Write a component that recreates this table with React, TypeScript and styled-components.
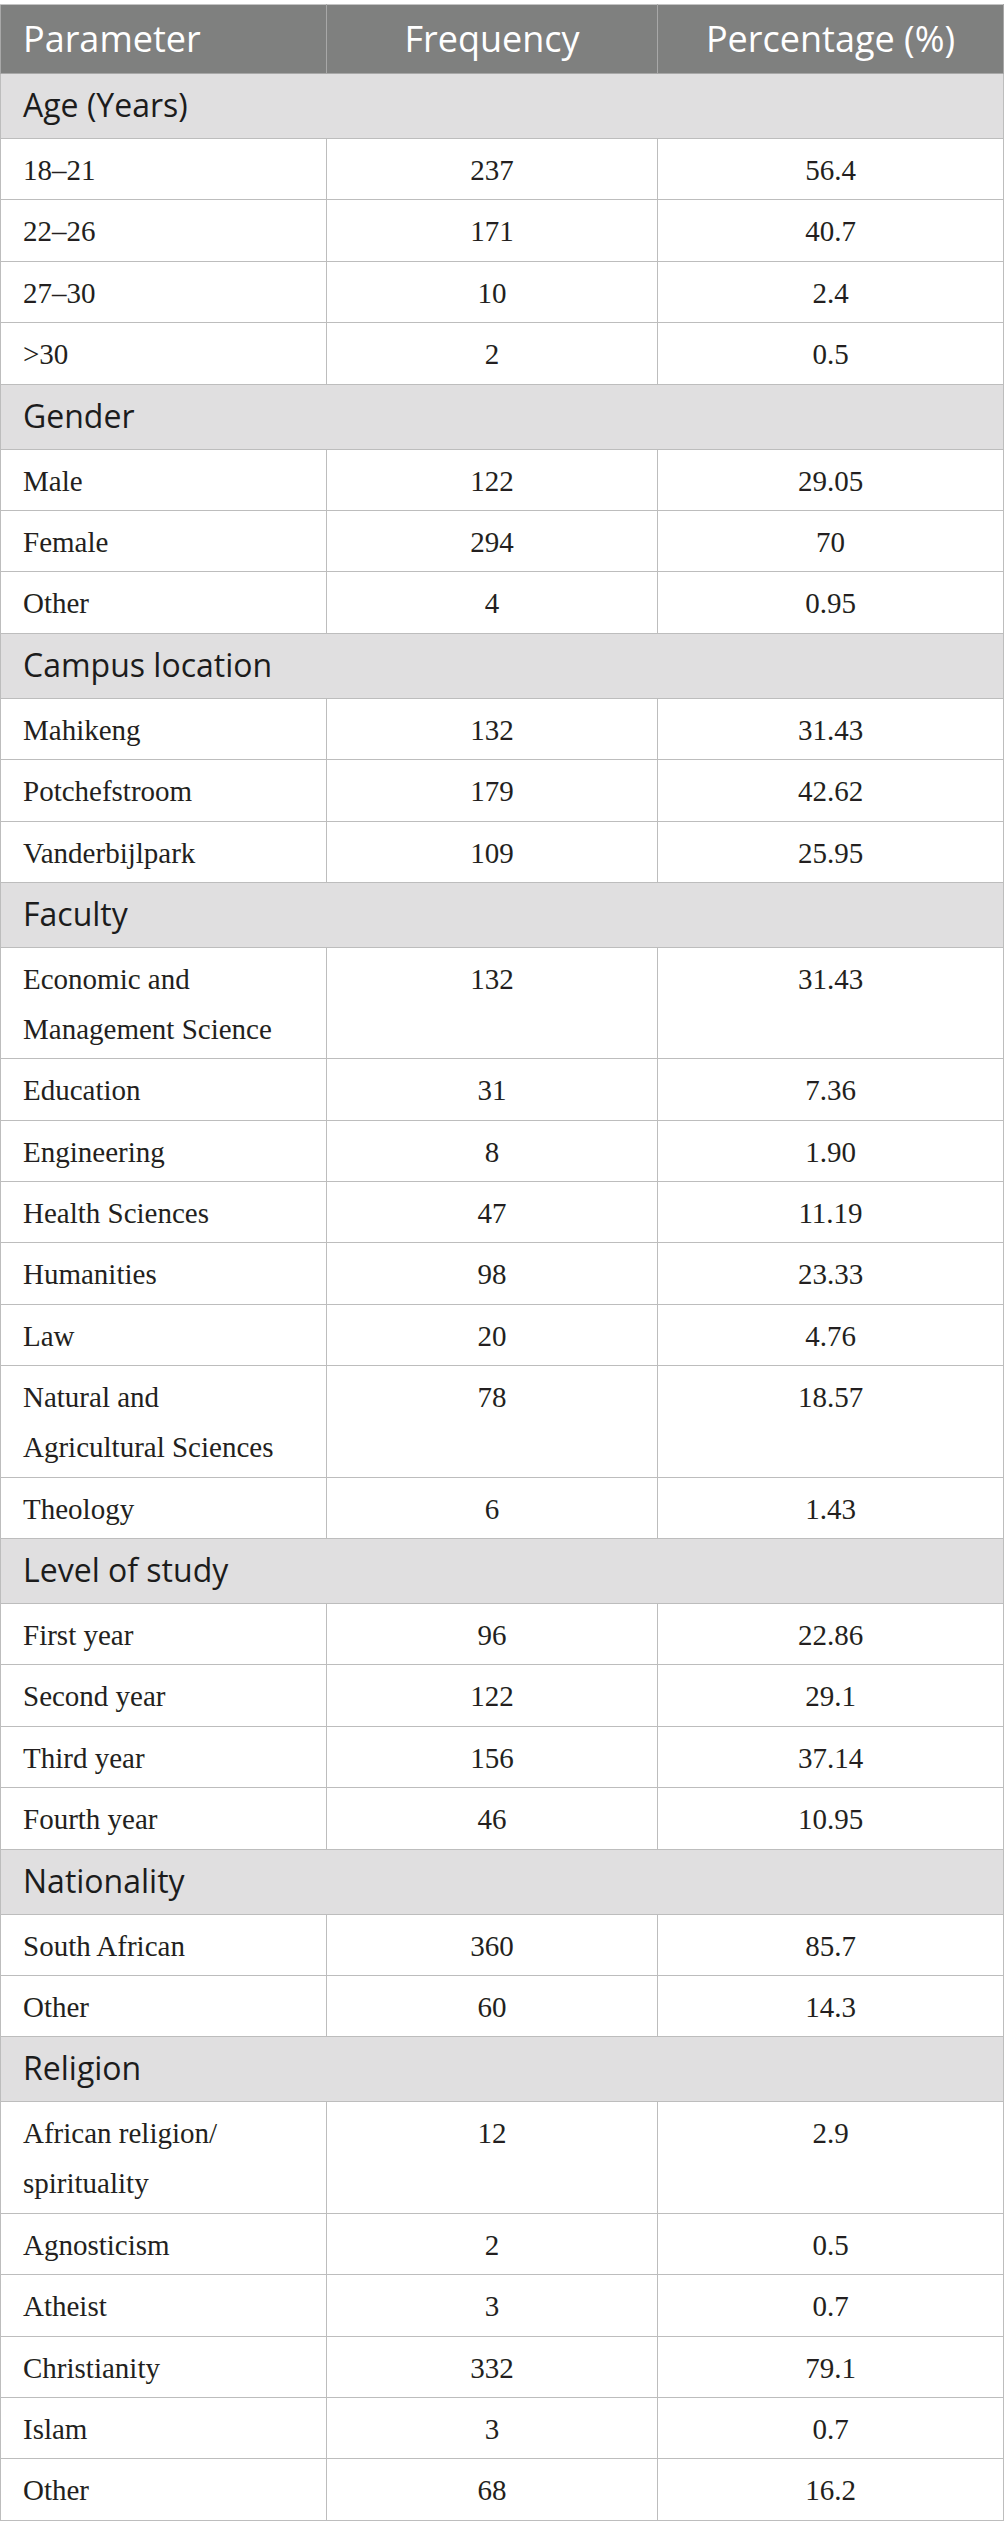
import React from 'react'
import styled, {createGlobalStyle} from 'styled-components'

const GlobalStyle = createGlobalStyle`
  html, body {
    margin: 0;
    padding: 0;
    background: #fff;
  }
`

const Page = styled.div`
  padding-top: 4px;
  width: 1005px;
`

const Table = styled.table`
  width: 1004px;
  border-collapse: collapse;
  table-layout: fixed;
  border: 1px solid #bdbdbd;
`

const HeadCell = styled.th<{align?: string}>`
  background: #7f807f;
  color: #fff;
  font-family: "Open Sans", "Noto Sans", sans-serif;
  font-weight: 400;
  font-size: 36px;
  line-height: 48px;
  padding: 10px 22px;
  text-align: ${p => p.align || 'center'};
  border: 1px solid #a8a8a8;
  border-top-color: #c4c4c4;
  white-space: nowrap;
`

const GroupCell = styled.td`
  background: #e0dfe0;
  color: #1c1c1c;
  font-family: "Open Sans", "Noto Sans", sans-serif;
  font-size: 32px;
  line-height: 44px;
  padding: 9px 22px 11px;
  border: 1px solid #bdbdbd;
`

const Cell = styled.td<{align?: string}>`
  color: #231f20;
  font-family: "Liberation Serif", "Times New Roman", serif;
  font-size: 29px;
  line-height: 50px;
  padding: 6px 22px 4.4px;
  vertical-align: top;
  text-align: ${p => p.align || 'left'};
  border: 1px solid #bdbdbd;
`

type Row = [string, string, string]
type Group = {title: string, rows: Row[]}

const groups: Group[] = [
  {title: 'Age (Years)', rows: [
    ['18–21', '237', '56.4'],
    ['22–26', '171', '40.7'],
    ['27–30', '10', '2.4'],
    ['>30', '2', '0.5'],
  ]},
  {title: 'Gender', rows: [
    ['Male', '122', '29.05'],
    ['Female', '294', '70'],
    ['Other', '4', '0.95'],
  ]},
  {title: 'Campus location', rows: [
    ['Mahikeng', '132', '31.43'],
    ['Potchefstroom', '179', '42.62'],
    ['Vanderbijlpark', '109', '25.95'],
  ]},
  {title: 'Faculty', rows: [
    ['Economic and Management Science', '132', '31.43'],
    ['Education', '31', '7.36'],
    ['Engineering', '8', '1.90'],
    ['Health Sciences', '47', '11.19'],
    ['Humanities', '98', '23.33'],
    ['Law', '20', '4.76'],
    ['Natural and Agricultural Sciences', '78', '18.57'],
    ['Theology', '6', '1.43'],
  ]},
  {title: 'Level of study', rows: [
    ['First year', '96', '22.86'],
    ['Second year', '122', '29.1'],
    ['Third year', '156', '37.14'],
    ['Fourth year', '46', '10.95'],
  ]},
  {title: 'Nationality', rows: [
    ['South African', '360', '85.7'],
    ['Other', '60', '14.3'],
  ]},
  {title: 'Religion', rows: [
    ['African religion/ spirituality', '12', '2.9'],
    ['Agnosticism', '2', '0.5'],
    ['Atheist', '3', '0.7'],
    ['Christianity', '332', '79.1'],
    ['Islam', '3', '0.7'],
    ['Other', '68', '16.2'],
  ]},
]

const App = () => {
  return <>
    <GlobalStyle/>
    <Page>
      <Table>
        <colgroup>
          <col style={{width: 326}}/>
          <col style={{width: 331}}/>
          <col/>
        </colgroup>
        <thead>
          <tr>
            <HeadCell align="left">Parameter</HeadCell>
            <HeadCell>Frequency</HeadCell>
            <HeadCell>Percentage (%)</HeadCell>
          </tr>
        </thead>
        <tbody>
          {groups.map(g => (
            <React.Fragment key={g.title}>
              <tr>
                <GroupCell colSpan={3}>{g.title}</GroupCell>
              </tr>
              {g.rows.map((r, i) => (
                <tr key={i}>
                  <Cell>{r[0]}</Cell>
                  <Cell align="center">{r[1]}</Cell>
                  <Cell align="center">{r[2]}</Cell>
                </tr>
              ))}
            </React.Fragment>
          ))}
        </tbody>
      </Table>
    </Page>
  </>
}

export default App
